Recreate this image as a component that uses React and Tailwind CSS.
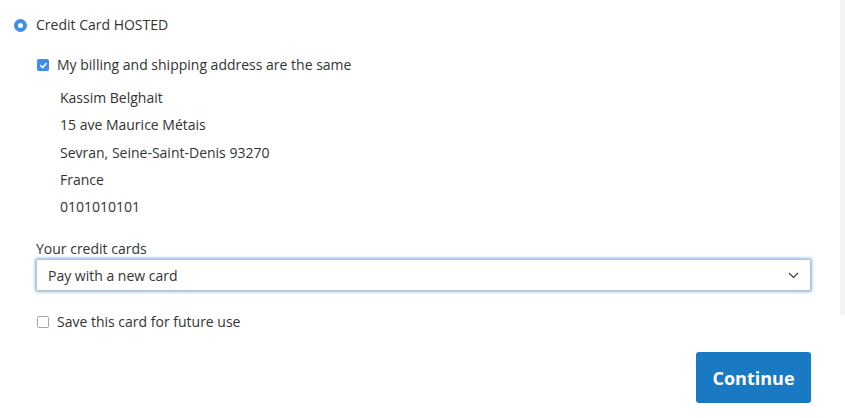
import React from 'react';

const address = [
  'Kassim Belghait',
  '15 ave Maurice Métais',
  'Sevran, Seine-Saint-Denis 93270',
  'France',
  '0101010101',
];

const App = () => {
  return (
    <div className="flex w-[845px] h-[418px] bg-white text-[#333] text-[14px] overflow-hidden" style={{ fontFamily: '"Open Sans", "Liberation Sans", sans-serif' }}>
      <div className="w-[840px] flex flex-col">
        {/* Payment method */}
        <div className="mt-[16px] h-[18px] flex items-center pl-[14px]">
          <span className="w-[13px] h-[13px] rounded-full bg-[#3f8fe8] flex items-center justify-center">
            <span className="w-[5px] h-[5px] rounded-full bg-white" />
          </span>
          <span className="ml-[9px] leading-[18px]">Credit Card HOSTED</span>
        </div>

        {/* Same address */}
        <div className="mt-[22px] h-[18px] flex items-center pl-[37px]">
          <span className="w-[12px] h-[12px] rounded-[2px] bg-[#3f8fe8] flex items-center justify-center">
            <svg width="9" height="9" viewBox="0 0 10 10" fill="none">
              <path d="M2 5.2 L4.2 7.3 L8 2.8" stroke="white" strokeWidth="1.8" strokeLinecap="round" strokeLinejoin="round" />
            </svg>
          </span>
          <span className="ml-[8px] leading-[18px]">My billing and shipping address are the same</span>
        </div>

        <div className="mt-[10px] pl-[60px] flex flex-col">
          {address.map(line => (
            <div key={line} className="leading-[27.3px]">{line}</div>
          ))}
        </div>

        {/* Saved cards */}
        <div className="ml-[36px] w-[775px] flex flex-col">
          <label className="mt-[20px] leading-[18px]">Your credit cards</label>
          <div className="mt-[1px] h-[32px] flex items-center justify-between border border-[#b8c4d0] rounded-[1px] shadow-[0_0_3px_1px_#8ab8e6] pl-[11px] pr-[11px]">
            <span>Pay with a new card</span>
            <svg width="11" height="7" viewBox="0 0 11 7" fill="none">
              <path d="M1 1 L5.5 5.5 L10 1" stroke="#333" strokeWidth="1.1" />
            </svg>
          </div>

          <div className="mt-[22px] h-[18px] flex items-center pl-[1px]">
            <span className="w-[12px] h-[12px] rounded-[2px] border border-[#a6a6a6] bg-white" />
            <span className="ml-[8px] leading-[18px]">Save this card for future use</span>
          </div>

          <div className="mt-[21px] flex justify-end">
            <button className="w-[115px] h-[51px] rounded-[3px] bg-[#1979c3] text-white text-[18px] font-bold pt-[2px]">
              Continue
            </button>
          </div>
        </div>
      </div>
      <div className="w-[5px] h-[315px] bg-[#f4f4f4]" />
    </div>
  );
};

export default App;
